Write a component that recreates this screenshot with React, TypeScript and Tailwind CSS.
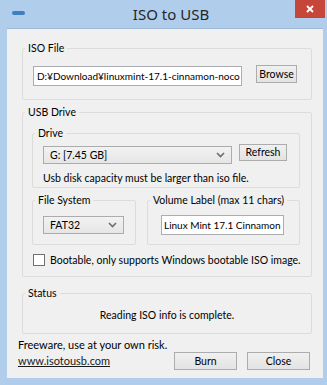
import React from "react";

function GroupBox({
  title,
  className = "",
  children,
}: {
  title: string;
  className?: string;
  children: React.ReactNode;
}) {
  return (
    <fieldset className={`border border-[#dcdcdc] rounded-[2px] min-w-0 ${className}`}>
      <legend className="ml-[2px] px-[3px] leading-[14px] whitespace-nowrap">{title}</legend>
      {children}
    </fieldset>
  );
}

function Combo({ value, className = "" }: { value: string; className?: string }) {
  return (
    <div
      className={`flex items-center h-[18px] border border-[#acacac] bg-gradient-to-b from-[#f2f2f2] to-[#e6e6e6] pl-[6px] pr-[6px] ${className}`}
    >
      <span className="flex-1 leading-none">{value}</span>
      <svg width="9" height="6" viewBox="0 0 9 6" className="text-[#6d6d6d]">
        <path d="M1 1 L4.5 4.5 L8 1" fill="none" stroke="currentColor" strokeWidth="1.6" />
      </svg>
    </div>
  );
}

function Btn({ label, className = "" }: { label: string; className?: string }) {
  return (
    <button
      className={`flex items-center justify-center border border-[#acacac] bg-gradient-to-b from-[#f0f0f0] to-[#e3e3e3] leading-none text-black whitespace-nowrap ${className}`}
    >
      {label}
    </button>
  );
}

export default function App() {
  return (
    <div className="w-[327px] h-[385px] bg-[#b0ceeb] flex flex-col font-['Lato',sans-serif] text-[10.5px] text-black overflow-hidden">
      {/* Title bar */}
      <div className="h-[28px] flex items-start">
        <div className="mt-[11px] ml-[12px] w-[13px] h-[4px] rounded-full bg-[#3f7fc0]" />
        <div className="flex-1 text-center pl-[22px] pt-[4px] font-['Noto_Sans',sans-serif] text-[15px] leading-[20px] text-[#262626]">
          ISO to USB
        </div>
        <div className="w-[30px] h-[18px] mr-[2px] bg-[#c7463a] flex items-center justify-center">
          <svg width="8" height="8" viewBox="0 0 8 8">
            <path d="M1 1 L7 7 M7 1 L1 7" stroke="white" strokeWidth="1.8" />
          </svg>
        </div>
      </div>

      {/* Client area */}
      <div className="flex-1 ml-[7px] mr-[4px] mb-[7px] bg-[#f0f0f0] border-t border-[#9fbad6] pt-[12px] pl-[11px] pr-[11px] flex flex-col">
        <GroupBox title="ISO File" className="ml-[4px]">
          <div className="flex items-start pl-[10px] pt-[11px] pb-[13px]">
            <div className="w-[209px] h-[20px] border border-[#abadb3] bg-white px-[3px] text-[10px] leading-[18px] whitespace-nowrap overflow-hidden">
              D:¥Download¥linuxmint-17.1-cinnamon-noco
            </div>
            <Btn label="Browse" className="ml-[14px] mt-[-1px] w-[41px] h-[18px]" />
          </div>
        </GroupBox>

        <GroupBox title="USB Drive" className="ml-[4px] mt-[5px]">
          <div className="pl-[9px] pr-[11px] pt-[7px] pb-[9px]">
            <GroupBox title="Drive">
              <div className="pl-[10px] pt-[6px] pb-[2px]">
                <div className="flex items-start">
                  <Combo value="G: [7.45 GB]" className="w-[189px]" />
                  <Btn label="Refresh" className="ml-[7px] mt-[-2px] w-[48px] h-[17px]" />
                </div>
                <div className="mt-[7px] leading-[14px] whitespace-nowrap">
                  Usb disk capacity must be larger than iso file.
                </div>
              </div>
            </GroupBox>

            <div className="flex mt-[5px]">
              <GroupBox title="File System" className="w-[104px]">
                <div className="pl-[10px] pt-[9px] pb-[9px]">
                  <Combo value="FAT32" className="w-[81px]" />
                </div>
              </GroupBox>
              <GroupBox title="Volume Label (max 11 chars)" className="ml-[11px] flex-1">
                <div className="pl-[13px] pt-[8px] pb-[9px]">
                  <div className="w-[123px] h-[20px] border border-[#abadb3] bg-white px-[2px] text-[10px] leading-[18px] whitespace-nowrap overflow-hidden">
                    Linux Mint 17.1 Cinnamon
                  </div>
                </div>
              </GroupBox>
            </div>

            <div className="flex items-center mt-[8px] ml-[1px]">
              <div className="w-[12px] h-[12px] border border-[#707070] bg-white shrink-0" />
              <span className="ml-[5px] leading-[14px] whitespace-nowrap">
                Bootable, only supports Windows bootable ISO image.
              </span>
            </div>
          </div>
        </GroupBox>

        <GroupBox title="Status" className="ml-[4px] mt-[9px]">
          <div className="text-center pt-[8px] pb-[11px] leading-[14px]">
            Reading ISO info is complete.
          </div>
        </GroupBox>

        <div className="mt-[4px] leading-[14px] text-[11px]">Freeware, use at your own risk.</div>
        <div className="flex items-center mt-[0px]">
          <a href="#" className="underline leading-[14px] text-[11px] text-[#1a1a1a]">
            www.isotousb.com
          </a>
          <Btn label="Burn" className="ml-auto w-[63px] h-[18px]" />
          <Btn label="Close" className="ml-[10px] mr-[2px] w-[63px] h-[18px]" />
        </div>
      </div>
    </div>
  );
}
